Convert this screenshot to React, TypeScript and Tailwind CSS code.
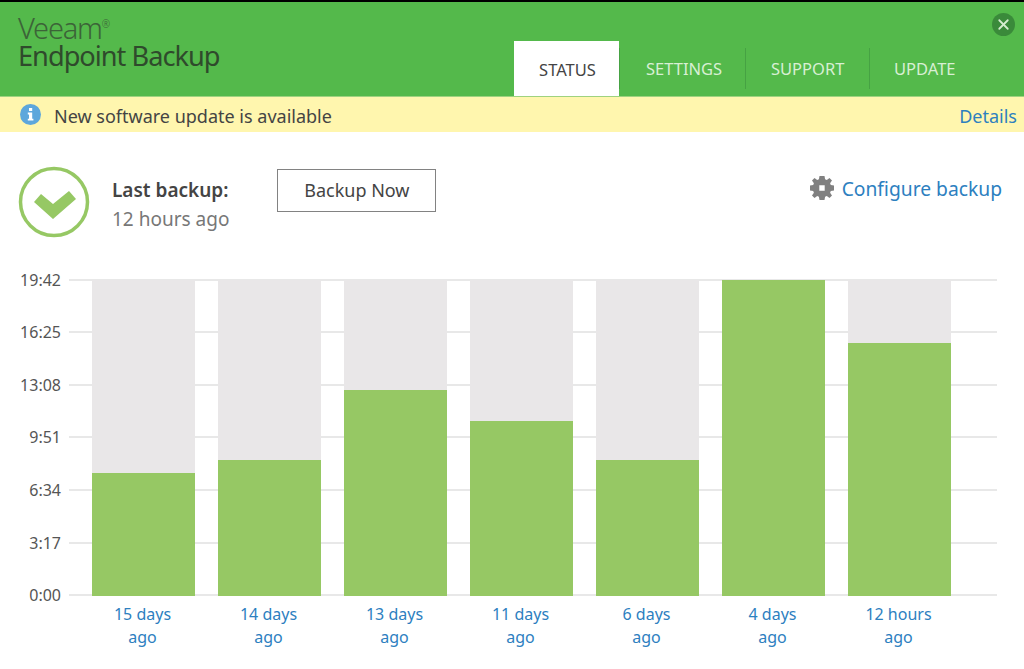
import { X } from "lucide-react";

const FONT = "font-['Noto_Sans','Open_Sans',sans-serif]";

const TABS = ["SETTINGS", "SUPPORT", "UPDATE"];
const TICKS = ["19:42", "16:25", "13:08", "9:51", "6:34", "3:17", "0:00"];
const BARS = [
  { h: 123, top: "15 days" },
  { h: 136, top: "14 days" },
  { h: 206, top: "13 days" },
  { h: 175, top: "11 days" },
  { h: 136, top: "6 days" },
  { h: 316, top: "4 days" },
  { h: 253, top: "12 hours" },
];

function Gear() {
  return (
    <svg width="24" height="24" viewBox="0 0 24 24" className="text-[#808080]">
      <path
        fill="currentColor"
        fillRule="evenodd"
        d="M9.5 0h5l.6 3.2 1.7.7L19.5 2 22 4.5l-1.9 2.7.7 1.7 3.2.6v5l-3.2.6-.7 1.7 1.9 2.7-2.5 2.5-2.7-1.9-1.7.7-.6 3.2h-5l-.6-3.2-1.7-.7L4.500 22 2 19.500l1.900-2.700-.7-1.700L0 14.500v-5l3.200-.6.7-1.700L2 4.500 4.500 2l2.700 1.900 1.700-.7L9.500 0zm-.2 9.300v5.400h5.400V9.300H9.300z"
      />
    </svg>
  );
}

function Check() {
  return (
    <svg width="72" height="72" viewBox="0 0 72 72">
      <circle cx="36" cy="36" r="33.5" fill="none" stroke="#96c864" strokeWidth="3.5" />
      <path d="M16 36l7-8 12 10 16-13 7 8-23 20z" fill="#96c864" />
    </svg>
  );
}

function InfoBadge() {
  return (
    <svg width="21" height="21" viewBox="0 0 21 21">
      <circle cx="10.5" cy="10.500" r="10.500" fill="#5da7dc" />
      <rect x="9" y="4" width="3.200" height="3" fill="#fff" />
      <path d="M7.800 8.600h4.400v6.200h1.200v1.800H7.800v-1.800H9v-4.400H7.800z" fill="#fff" />
    </svg>
  );
}

export default function App() {
  return (
    <div className={`${FONT} w-[1024px] h-[669px] bg-white overflow-hidden border-t-2 border-black`}>
      <header className="h-[94px] bg-[#54b94b] flex justify-between pl-[18px] pr-[9px]">
        <div className="pt-[11px] text-[#2f4a2c]">
          <div className="text-[29px] font-light tracking-[-1.2px] leading-[29px] text-[#3c6338]">
            Veeam<sup className="text-[10px] -top-[11px]">®</sup>
          </div>
          <div className="text-[27.200px] tracking-[-1px] leading-[28px]">Endpoint Backup</div>
        </div>
        <div className="flex flex-col items-end">
          <div className="mt-[11px] w-[23px] h-[23px] rounded-full bg-[#3a8a3a] flex items-center justify-center">
            <X size={17} strokeWidth={2.5} className="text-[#d4eccf]" />
          </div>
          <nav className="mt-[5px] mr-[57px] flex items-end text-[16.500px]">
            <div className="w-[105px] h-[55px] bg-white text-[#444] flex items-center justify-center pt-[3px] pl-[2px]">
              STATUS
            </div>
            {TABS.map((t, i) => (
              <div
                key={t}
                className={`h-[41px] mb-[7px] pt-[2px] flex items-center text-[#d8efd4] border-l border-[#46a243] ${
                  i === 0 ? "w-[126px] pl-[26px]" : i === 1 ? "w-[124px] pl-[25px]" : "w-[89px] pl-[24px]"
                }`}
              >
                {t}
              </div>
            ))}
          </nav>
        </div>
      </header>

      <div className="h-[36px] bg-[#fff6ae] border-t border-[#9fd27f] flex items-center justify-between pl-[20px] pr-[7px] text-[18px] pt-[3px]">
        <div className="flex items-center gap-[13px] text-[#444]">
          <div className="-mt-[3px]">
            <InfoBadge />
          </div>
          <span>New software update is available</span>
        </div>
        <span className="text-[#2d80bf]">Details</span>
      </div>

      <section className="h-[146px] pl-[18px] pr-[22px] pt-[34px] flex justify-between">
        <div className="flex">
          <Check />
          <div className="ml-[22px] pt-[10px] text-[19px] leading-[29px]">
            <div className="font-semibold text-[#444]">Last backup:</div>
            <div className="text-[#777]">12 hours ago</div>
          </div>
          <button className="ml-[48px] mt-[3px] w-[159px] h-[43px] border-[1.500px] border-[#828282] text-[18px] text-[#444]">
            Backup Now
          </button>
        </div>
        <div className="flex items-start gap-[8px] pt-[10px] text-[#2d80bf] text-[19.250px] leading-[26px]">
          <Gear />
          <span>Configure backup</span>
        </div>
      </section>

      <section className="relative pl-[20px] w-[997px] pt-[1px]">
        <div className="h-[317px] flex flex-col justify-between">
          {TICKS.map((t) => (
            <div key={t} className="h-[1px] flex items-center">
              <span className="w-[41px] text-right text-[16px] text-[#555]">{t}</span>
              <div className="ml-[8px] flex-1 h-[2px] bg-[#e8e8e8]" />
            </div>
          ))}
        </div>
        <div className="absolute left-[92px] top-[2px] h-[316px] flex gap-[23px]">
          {BARS.map((b) => (
            <div key={b.top} className="w-[103px] h-full bg-[#e9e7e8] flex flex-col justify-end">
              <div className="bg-[#96c864]" style={{ height: b.h }} />
            </div>
          ))}
        </div>
        <div className="ml-[71px] mt-[7px] flex gap-[23px]">
          {BARS.map((b) => (
            <div key={b.top} className="w-[103px] text-center text-[#2d80bf] text-[16px] leading-[23px]">
              {b.top}
              <br />
              ago
            </div>
          ))}
        </div>
      </section>
    </div>
  );
}
